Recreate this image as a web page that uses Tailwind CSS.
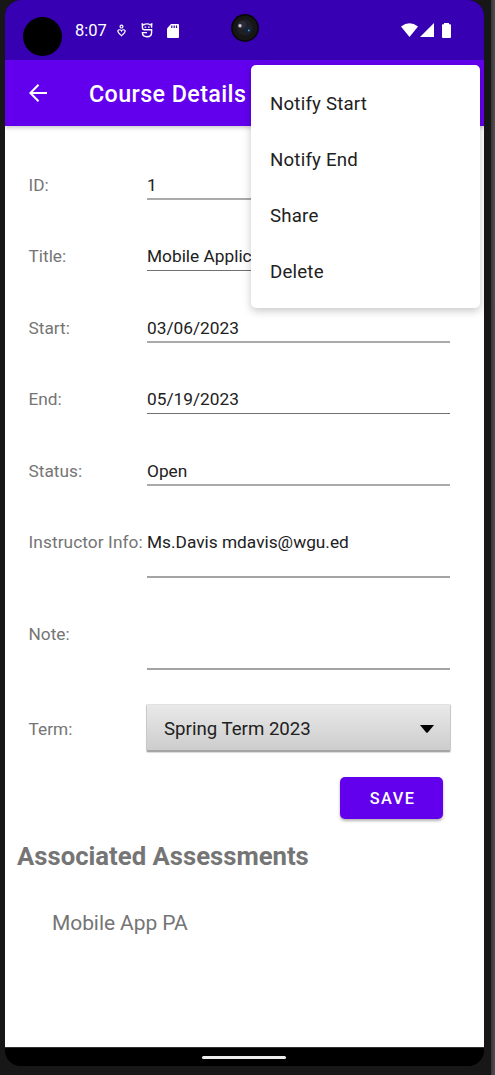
<!DOCTYPE html>
<html lang="en">
<head>
<meta charset="utf-8">
<title>Course Details</title>
<script src="https://cdn.jsdelivr.net/npm/@tailwindcss/browser@4"></script>
</head>
<body class="w-[495px] h-[1075px] overflow-hidden bg-[#161616] font-['Roboto',sans-serif]">
<div class="relative flex h-[1075px] w-[495px] bg-[#171717] pl-[5px]">
  <div class="flex h-[1066px] w-[479px] flex-col overflow-hidden rounded-[16px] bg-black">
    <header class="relative flex h-[60px] shrink-0 items-center bg-[#3700b3] pl-[18px] text-white">
      <div class="mt-[13px] size-[39px] rounded-full bg-black"></div>
      <span class="ml-[13px] w-[32px] whitespace-nowrap text-[16.5px] leading-5 mt-[1px]">8:07</span>
      <svg class="ml-[10px] h-[13px] w-[9px]" viewBox="0 0 10 14" fill="none" stroke="white" stroke-width="1.3"><circle cx="5" cy="2.6" r="1.6"/><path d="M1 7.2C2.3 5.4 4.2 6.2 5 7.6C5.8 6.2 7.7 5.4 9 7.2C9.6 9 7 11 5 12.8C3 11 .4 9 1 7.2Z"/></svg>
      <svg class="ml-[15px] mt-[1px] h-[15px] w-[12px]" viewBox="0 0 12 15" fill="none" stroke="white" stroke-width="1.4"><path d="M.5 1H2.2M9.8 1H11.5M1.4 1.2V4.5Q1.4 6.8 3.6 6.8H10.6V9.5Q10.6 13.8 6 13.8Q1.4 13.8 1.4 9.6H6M10.6 1.2V4.7M2.2 2.2Q6 -.4 9.8 2.2"/><path d="M3.6 4.2H5.2M7 4.2H8.6" stroke-width="1.2"/></svg>
      <svg class="ml-[14px] mt-[1px] h-[14px] w-[12px]" viewBox="0 0 12 14"><path fill="white" d="M4 0H11Q12 0 12 1V13Q12 14 11 14H1Q0 14 0 13V4.5Z"/><path d="M4.8 1.5V4M7.2 1.5V4M9.5 1.5V4" stroke="#3700b3" stroke-width="1.2"/></svg>
      <svg class="ml-[52px] mb-[4px] size-[28px]" viewBox="0 0 28 28"><circle cx="14" cy="14" r="13.9" fill="#080808"/><circle cx="14" cy="14" r="12.3" fill="#161616"/><circle cx="13.5" cy="13.5" r="8" fill="#1e1e25"/><ellipse cx="11" cy="11" rx="4.5" ry="4" fill="#2a2b34"/><circle cx="17" cy="16" r="3.7" fill="#182235"/><circle cx="9" cy="11.7" r="1.7" fill="#d0c7d2"/><circle cx="17.8" cy="16.4" r=".9" fill="#4a9bd9"/></svg>
      <svg class="ml-[142px] h-[15px] w-[51px]" viewBox="0 0 51 15" fill="white"><path d="M0 3.5Q8.5-2.8 17 3.5L8.5 14Z"/><path d="M19 14H33V0Z"/><path d="M43 0H48V1.2H49.2Q50 1.2 50 2V14Q50 15 49 15H42Q41 15 41 14V2Q41 1.2 41.8 1.2H43Z"/></svg>
    </header>
    <div class="relative flex h-[66px] shrink-0 items-center bg-[#6200ee] pl-[24px] text-white shadow-[0_2px_4px_rgba(0,0,0,0.2)]">
      <svg class="h-[18px] w-[18px]" viewBox="0 0 18 18" fill="none" stroke="white" stroke-width="2"><path d="M18 9H1.5M9.5 .8L1.4 9L9.5 17.2"/></svg>
      <h1 class="ml-[42px] whitespace-nowrap text-[23.3px] font-medium leading-8 tracking-[0.4px] mt-[1px]">Course Details</h1>
    </div>
    <main class="flex grow flex-col bg-white pt-[48px]">
      <div class="flex flex-col gap-[46px] pl-[23.5px] text-[17.3px] leading-[22px]">
        <div class="flex"><span class="w-[118.5px] whitespace-nowrap text-[#757575]">ID:</span><span class="h-[26px] w-[303px] border-b-2 border-[#aaa] text-[#212121]">1</span></div>
        <div class="flex leading-[20px]"><span class="w-[118.5px] whitespace-nowrap text-[#757575]">Title:</span><span class="h-[25px] w-[303px] whitespace-nowrap border-b border-[#707070] text-[#212121]">Mobile Applic</span></div>
        <div class="flex"><span class="w-[118.5px] whitespace-nowrap text-[#757575]">Start:</span><span class="h-[26px] w-[303px] border-b-2 border-[#aaa] text-[#212121]">03/06/2023</span></div>
        <div class="flex leading-[20px]"><span class="w-[118.5px] whitespace-nowrap text-[#757575]">End:</span><span class="h-[25px] w-[303px] border-b border-[#707070] text-[#212121]">05/19/2023</span></div>
        <div class="flex"><span class="w-[118.5px] whitespace-nowrap text-[#757575]">Status:</span><span class="h-[26px] w-[303px] border-b-2 border-[#aaa] text-[#212121]">Open</span></div>
        <div class="flex leading-[20px]"><span class="w-[118.5px] whitespace-nowrap tracking-[0.08px] text-[#757575]">Instructor Info:</span><span class="h-[46px] w-[303px] border-b-2 border-[#a4a4a4] text-[#212121]">Ms.Davis mdavis@wgu.ed</span></div>
        <div class="flex leading-[20px]"><span class="w-[118.5px] whitespace-nowrap text-[#757575]">Note:</span><span class="h-[46px] w-[303px] border-b-2 border-[#a4a4a4]"></span></div>
      </div>
      <div class="mt-[34px] flex items-center pl-[23.5px]">
        <span class="w-[117.5px] text-[17.3px] leading-[22px] text-[#757575] mt-[2px]">Term:</span>
        <div class="flex h-[48px] w-[305px] items-center justify-between rounded-[2px] border border-b-2 border-[#c9c9c9] border-t-[#e2e2e2] border-b-[#a5a5a5] bg-linear-to-b from-[#e9e9e9] to-[#cdcdcd] pl-[17px] pr-[16px] shadow-[0_1px_1px_rgba(0,0,0,0.15)]">
          <span class="text-[18.67px] leading-6 text-[#212121] mt-[2px]">Spring Term 2023</span>
          <svg class="mt-[2px] h-[8px] w-[14px]" viewBox="0 0 14 8"><path d="M0 0H14L7.8 7.4Q7 8.2 6.2 7.4Z"/></svg>
        </div>
      </div>
      <button class="ml-[335px] mt-[25px] flex h-[42px] w-[103px] shrink-0 items-center justify-center rounded-[5px] bg-[#6200ee] pl-[2px] pt-[2px] text-[16.35px] font-medium tracking-[1.45px] text-white shadow-[0_2px_3px_rgba(0,0,0,0.3)]">SAVE</button>
      <h2 class="ml-[12px] mt-[21px] text-[25.7px] font-bold leading-8 text-[#757575]">Associated Assessments</h2>
      <p class="ml-[47px] mt-[37px] text-[21px] leading-7 tracking-[-0.08px] text-[#757575]">Mobile App PA</p>
    </main>
    <footer class="flex h-[19px] shrink-0 justify-center border-t border-[#303030] bg-black pt-[8px] pr-[1px]">
      <div class="h-[3px] w-[84px] rounded-full bg-[#ececec]"></div>
    </footer>
  </div>
  <div class="ml-auto h-full w-[4px] bg-linear-to-r from-[#383838] to-[#505050]"></div>
  <nav class="absolute left-[251px] top-[65px] h-[243px] w-[229px] rounded-[5px] bg-white pl-[19px] pt-[11px] text-[18.67px] text-[#212121] shadow-[0_3px_8px_rgba(0,0,0,0.22)]">
    <div class="flex h-[56px] items-center tracking-[0.2px]">Notify Start</div>
    <div class="flex h-[56px] items-center tracking-[0.2px]">Notify End</div>
    <div class="flex h-[56px] items-center tracking-[0.2px]">Share</div>
    <div class="flex h-[56px] items-center tracking-[0.2px]">Delete</div>
  </nav>
</div>
</body>
</html>
